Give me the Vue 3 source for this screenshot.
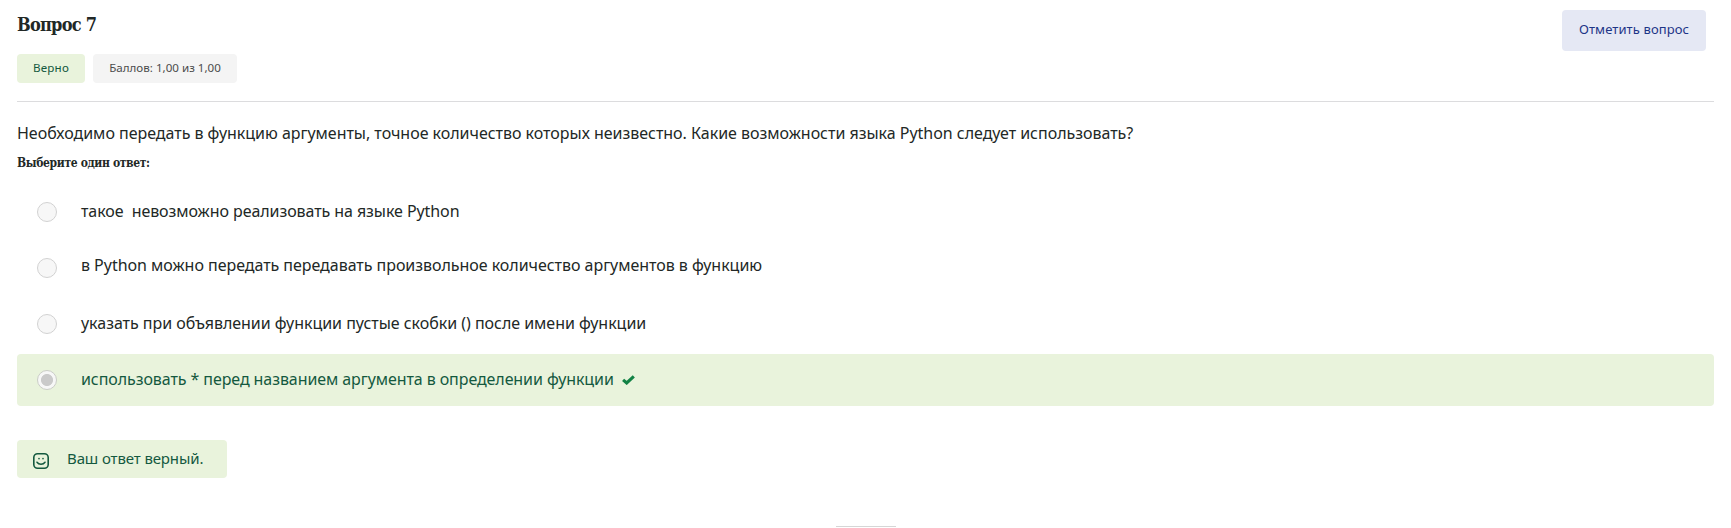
<script setup>
const options = [
  { id: 'a', text: 'такое\u00a0 невозможно реализовать на языке Python' },
  { id: 'b', text: 'в Python можно передать передавать произвольное количество аргументов в функцию' },
  { id: 'c', text: 'указать при объявлении функции пустые скобки () после имени функции' },
  { id: 'd', text: 'использовать * перед названием аргумента в определении функции', correct: true },
]
</script>

<template>
  <main class="question">
    <header class="head">
      <div class="info">
        <h1 class="title">Вопрос 7</h1>
        <div class="badges">
          <span class="badge state">Верно</span>
          <span class="badge grade">Баллов: 1,00 из 1,00</span>
        </div>
      </div>
      <button class="flag" type="button"><span>Отметить вопрос</span></button>
    </header>
    <p class="text">Необходимо передать в функцию аргументы, точное количество которых неизвестно. Какие возможности языка Python следует использовать?</p>
    <h2 class="prompt">Выберите один ответ:</h2>
    <div class="answers">
      <div v-for="o in options" :key="o.id" class="answer" :class="[o.id, { correct: o.correct }]">
        <span class="radio"></span>
        <span class="label">{{ o.text }}</span>
        <svg v-if="o.correct" class="check" viewBox="0 0 13 10" width="13" height="10">
          <path d="M1.1 4.8 L4.7 8 L11.8 1.4" fill="none" stroke="#128245" stroke-width="3.1" />
        </svg>
      </div>
    </div>
    <div class="feedback">
      <svg class="smile" viewBox="0 0 16 16" width="16" height="16" fill="none" stroke="#14593f" stroke-linecap="round">
        <rect x=".8" y=".8" width="14.4" height="14.4" rx="3.8" stroke-width="1.6" />
        <path d="M4 9.2 C5.8 11.8 10.2 11.8 12 9.2" stroke-width="1.5" />
        <path d="M6 5.6v.1M10 5.6v.1" stroke-width="1.6" />
      </svg>
      <span class="verdict">Ваш ответ верный.</span>
    </div>
    <hr class="end" />
  </main>
</template>

<style>
body { background: #fff; }
</style>

<style scoped>
.question {
  box-sizing: border-box;
  height: 528px;
  padding: 0 17px;
  overflow: hidden;
  font-family: "Noto Sans", "Open Sans", sans-serif;
  color: #222826;
  white-space: nowrap;
}
.head {
  box-sizing: border-box;
  display: flex;
  justify-content: space-between;
  align-items: flex-start;
  height: 102px;
  padding: 10px 8px 0 0;
  border-bottom: 1px solid #dcdcde;
}
.title {
  margin: 3px 0 17px;
  font: bold 18px/24px "DejaVu Serif Condensed", "DejaVu Serif", serif;
  font-stretch: condensed;
  letter-spacing: -0.75px;
}
.badges { display: flex; gap: 8px; }
.badge {
  box-sizing: border-box;
  height: 29px;
  border-radius: 4px;
  text-align: center;
  font-size: 11.6px;
  line-height: 28px;
}
.state { width: 68px; background: #e9f3dc; color: #14593f; letter-spacing: 0.2px; }
.grade { width: 144px; background: #f4f4f4; color: #4c4c4c; }
.flag {
  box-sizing: border-box;
  width: 144px;
  height: 41px;
  padding: 0 0 4px;
  border: 0;
  border-radius: 4px;
  background: #e5e8f4;
  color: #1d3587;
  font: 13px/20px "Noto Sans", sans-serif;
  letter-spacing: 0.11px;
}
.text {
  margin: 19px 0 0;
  font-size: 16px;
  line-height: 24px;
  letter-spacing: -0.022px;
}
.prompt {
  margin: 9px 0 0;
  font: bold 12px/18px "DejaVu Serif Condensed", "DejaVu Serif", serif;
  font-stretch: condensed;
  letter-spacing: -0.36px;
}
.answers {
  display: flex;
  flex-direction: column;
  gap: 4px;
  margin-top: 14px;
}
.answer {
  box-sizing: border-box;
  display: flex;
  align-items: center;
  height: 52px;
  padding-left: 20px;
  border-radius: 4px;
  font-size: 16px;
  line-height: 24px;
}
.radio {
  box-sizing: border-box;
  flex: none;
  width: 20px;
  height: 20px;
  margin-right: 24px;
  border: 1px solid #d2d2d2;
  border-radius: 50%;
  background: #f7f7f7;
}
.label { padding-bottom: 3px; }
.a .label { letter-spacing: -0.07px; }
.b .label { padding-bottom: 7px; letter-spacing: -0.035px; }
.c .label { letter-spacing: -0.03px; }
.d .label { letter-spacing: -0.08px; }
.correct { background: #e9f3dc; color: #14593f; }
.correct .radio {
  border-color: #cbcdc8;
  background: radial-gradient(circle, #cacaca 0 5.6px, #f7f7f7 6.4px);
}
.check { margin-left: 8px; }
.feedback {
  box-sizing: border-box;
  display: flex;
  align-items: center;
  width: 210px;
  height: 38px;
  margin-top: 34px;
  padding-left: 16px;
  border-radius: 4px;
  background: #e9f3dc;
  color: #14593f;
}
.smile { margin: 4px 18px 0 0; }
.verdict { font-size: 15px; line-height: 22px; padding-bottom: 3px; letter-spacing: -0.12px; }
.end {
  width: 60px;
  height: 1px;
  margin: 48px auto 0;
  border: 0;
  background: #d6d6d6;
}
</style>
